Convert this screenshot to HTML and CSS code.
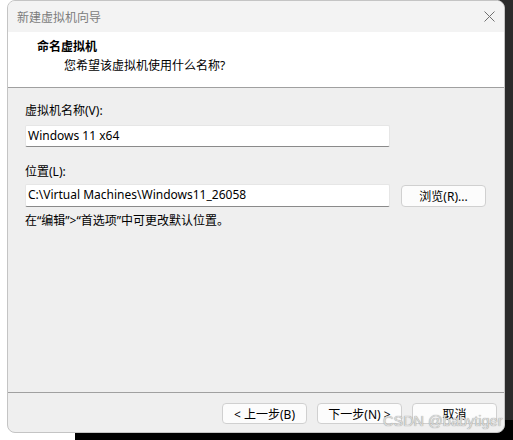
FILE: index.html
```html
<!DOCTYPE html>
<html lang="zh-CN">
<head>
<meta charset="utf-8">
<title>新建虚拟机向导</title>
<link rel="stylesheet" href="styles.css">
</head>
<body>
<div class="desk-right"></div>
<div class="desk-bottom"></div>
<div class="window">
  <div class="titlebar">
    <span class="title">新建虚拟机向导</span>
    <svg class="close" width="11" height="11" viewBox="0 0 11 11"><path d="M0.5 0.5L10.5 10.5M10.5 0.5L0.5 10.5" stroke="#707070" stroke-width="1" fill="none"/></svg>
  </div>
  <div class="header">
    <div class="h-title">命名虚拟机</div>
    <div class="h-sub">您希望该虚拟机使用什么名称?</div>
  </div>
  <div class="body">
    <div class="label">虚拟机名称(V):</div>
    <div class="row row1">
      <div class="input">Windows 11 x64</div>
    </div>
    <div class="label label2">位置(L):</div>
    <div class="row row2">
      <div class="input">C:\Virtual Machines\Windows11_26058</div>
      <div class="btn browse">浏览(R)...</div>
    </div>
    <div class="note">在“编辑”&gt;“首选项”中可更改默认位置。</div>
  </div>
  <div class="footer">
    <div class="btn">&lt; 上一步(B)</div>
    <div class="btn">下一步(N) &gt;</div>
    <div class="btn">取消</div>
  </div>
</div>
<div class="watermark">CSDN @babytiger</div>
</body>
</html>
```

FILE: styles.css
```css
html, body {
  margin: 0;
  padding: 0;
  background: #ffffff;
  width: 513px;
  height: 440px;
  overflow: hidden;
  font-family: "Noto Sans", "Noto Sans CJK SC", sans-serif;
  font-size: 12px;
  color: #000;
}
.desk-right {
  position: absolute;
  left: 498px;
  top: 0;
  width: 15px;
  height: 440px;
  background: #2b2b2b;
}
.desk-bottom {
  position: absolute;
  left: 75px;
  top: 420px;
  width: 438px;
  height: 20px;
  background: #000;
}
.window {
  position: absolute;
  left: 7px;
  top: 0;
  width: 496px;
  height: 431px;
  border: 1px solid #c4c4c4;
  border-radius: 8px;
  overflow: hidden;
  background: #efefef;
  display: flex;
  flex-direction: column;
}
.titlebar {
  height: 31px;
  flex: none;
  background: #f3f3f3;
  display: flex;
  align-items: center;
  justify-content: space-between;
  padding: 0 9px 0 9px;
}
.title {
  color: #7c7c7c;
  font-size: 12px;
}
.header {
  flex: none;
  background: #fff;
  border-bottom: 1px solid #a0a0a0;
  padding: 6px 0 0 29px;
  box-sizing: border-box;
  height: 56px;
}
.h-title {
  font-weight: bold;
  line-height: 18px;
}
.h-sub {
  padding-left: 27px;
  line-height: 19px;
}
.body {
  flex: 1;
  padding: 14px 0 0 17px;
}
.label {
  line-height: 17px;
}
.label2 {
  margin-top: 16px;
}
.row {
  display: flex;
  align-items: center;
}
.row1 {
  margin-top: 6px;
}
.row2 {
  margin-top: 4px;
}
.input {
  width: 365px;
  height: 22px;
  box-sizing: border-box;
  background: #fff;
  border: 1px solid #e6e6e6;
  border-bottom: 1px solid #8a8a8a;
  border-radius: 2px;
  padding: 0 2px;
  line-height: 20px;
  white-space: nowrap;
  overflow: hidden;
}
.row2 .input {
  height: 23px;
}
.btn {
  width: 85px;
  height: 21px;
  box-sizing: border-box;
  background: #fcfcfc;
  border: 1px solid #d0d0d0;
  border-radius: 4px;
  display: flex;
  align-items: center;
  justify-content: center;
  font-size: 12px;
}
.browse {
  margin-left: 11px;
  height: 22px;
}
.note {
  margin-top: 5px;
  line-height: 17px;
}
.footer {
  height: 40px;
  flex: none;
  border-top: 1px solid #a0a0a0;
  display: flex;
  justify-content: flex-end;
  align-items: flex-start;
  gap: 10px;
  padding: 10px 7px 0 0;
  box-sizing: border-box;
}
.watermark {
  position: absolute;
  left: 383px;
  top: 413px;
  white-space: nowrap;
  font-family: "Liberation Sans", sans-serif;
  font-size: 14.5px;
  color: #dcdcdc;
  text-shadow: 0 0 1px #7a7a7a;
}
```
